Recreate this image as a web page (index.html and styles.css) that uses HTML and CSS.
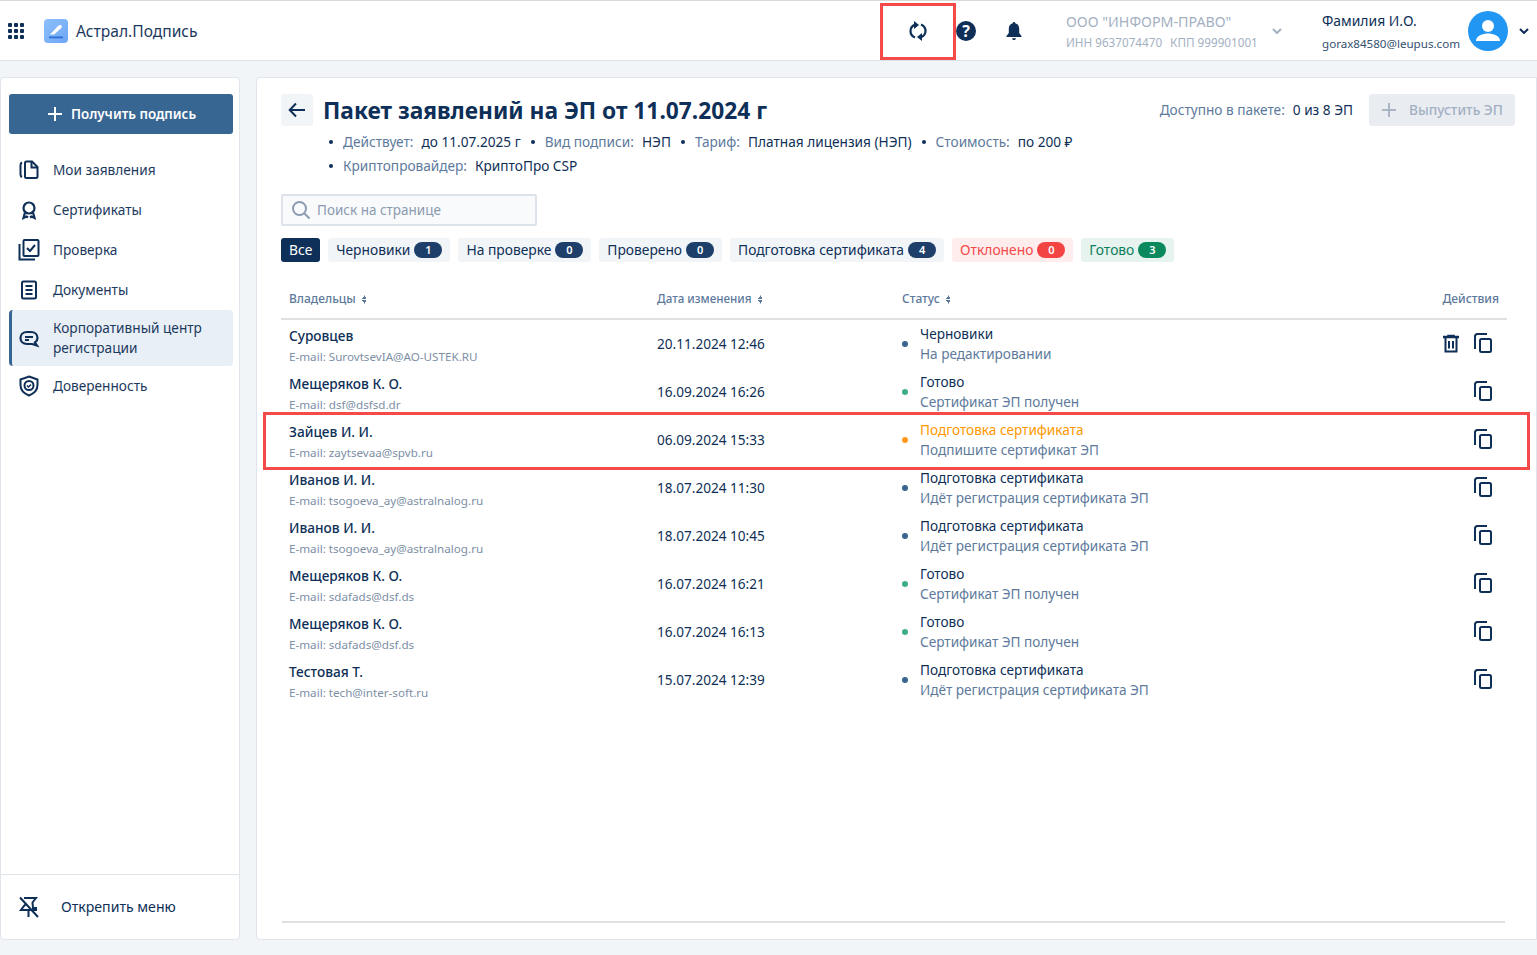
FILE: index.html
```html
<!DOCTYPE html>
<html lang="ru">
<head>
<meta charset="utf-8">
<title>Астрал.Подпись</title>
<link rel="stylesheet" href="styles.css">
</head>
<body>
<svg class="defs" width="0" height="0">
  <defs>
    <symbol id="copy" viewBox="0 0 20 20"><path d="M2 16V3.500C2 2 3 1 4.500 1H14" fill="none" stroke="currentColor" stroke-width="2"/><rect x="7" y="6" width="11" height="13" rx="1.500" fill="none" stroke="currentColor" stroke-width="2"/></symbol>
  </defs>
</svg>
<header class="topbar">
  <div class="brand">
    <svg class="apps" width="18" height="18" viewBox="0 0 18 18"><g fill="#0e2f57"><rect x="1" y="1" width="4" height="4" rx="1"/><rect x="7" y="1" width="4" height="4" rx="1"/><rect x="13" y="1" width="4" height="4" rx="1"/><rect x="1" y="7" width="4" height="4" rx="1"/><rect x="7" y="7" width="4" height="4" rx="1"/><rect x="13" y="7" width="4" height="4" rx="1"/><rect x="1" y="13" width="4" height="4" rx="1"/><rect x="7" y="13" width="4" height="4" rx="1"/><rect x="13" y="13" width="4" height="4" rx="1"/></g></svg>
    <svg class="logo" width="24" height="24" viewBox="0 0 24 24"><defs><linearGradient id="lg" x1="0" y1="0" x2="1" y2="1"><stop offset="0" stop-color="#8cc0fb"/><stop offset="1" stop-color="#6ea6f5"/></linearGradient></defs><rect width="24" height="24" rx="4" fill="url(#lg)"/><path d="M6 15.500 14.500 6.500C15.300 5.700 17 5.800 17.500 6.500 18 7.300 18 8.300 17.300 9L10 15.500Z" fill="#fff"/><rect x="5" y="17.500" width="14" height="1.800" fill="#2f6fd6"/></svg>
    <span class="brand-name">Астрал.Подпись</span>
  </div>
  <div class="top-actions">
    <button class="icon-btn refresh" type="button" aria-label="Обновить">
      <svg width="20" height="20" viewBox="0 0 20 20" fill="none" stroke="#0e2f57" stroke-width="2.200"><path d="M7 16.500C4 15.300 2.500 13 2.500 10 2.500 7 3.800 5 7 3.900"/><path d="M6 0V8L11 4Z" fill="#0e2f57" stroke="none"/><path d="M13 3.500C16 4.700 17.500 7 17.500 10 17.500 13 16.200 15 13 16.100"/><path d="M14 12V20L9 16Z" fill="#0e2f57" stroke="none"/></svg>
    </button>
    <svg class="help" width="20" height="20" viewBox="0 0 20 20"><circle cx="10" cy="10" r="10" fill="#0e2f57"/><text class="help-q" x="10" y="15.500" text-anchor="middle">?</text></svg>
    <svg class="bell" width="16" height="20" viewBox="0 0 16 20"><path d="M8 1C8.800 1 9.300 1.600 9.300 2.300 11.800 2.900 13.200 5 13.200 7.800V12L15.500 15V16H.5V15L2.800 12V7.800C2.800 5 4.200 2.900 6.700 2.300 6.700 1.600 7.200 1 8 1Z" fill="#0e2f57"/><path d="M6 17.200H10C10 18.300 9 19 8 19S6 18.300 6 17.200Z" fill="#0e2f57"/></svg>
    <div class="org">
      <div class="org-name">ООО "ИНФОРМ-ПРАВО"</div>
      <div class="org-meta"><span>ИНН 9637074470</span><span>КПП 999901001</span></div>
    </div>
    <svg class="chev chev-org" width="10" height="6" viewBox="0 0 10 6"><path d="M1 1 5 5 9 1" fill="none" stroke="#a3b0c2" stroke-width="2"/></svg>
    <div class="user">
      <div class="user-name">Фамилия И.О.</div>
      <div class="user-mail">gorax84580@leupus.com</div>
    </div>
    <svg class="avatar" width="40" height="40" viewBox="0 0 40 40"><circle cx="20" cy="20" r="20" fill="#2196f3"/><circle cx="20" cy="15" r="6" fill="#fff"/><path d="M8 30C8 24.500 15 22.500 20 22.500S32 24.500 32 30Z" fill="#fff"/></svg>
    <svg class="chev chev-user" width="10" height="6" viewBox="0 0 10 6"><path d="M1 1 5 5 9 1" fill="none" stroke="#0e2f57" stroke-width="2"/></svg>
  </div>
</header>

<div class="layout">
  <aside class="sidebar">
    <div class="side-top">
      <button class="get-btn" type="button"><span class="plus"></span>Получить подпись</button>
      <nav class="nav">
        <a class="nav-item">
          <svg width="24" height="24" viewBox="0 0 24 24" fill="none" stroke="#0e2f57" stroke-width="2"><path d="M5 4.500C4 5 3.500 6 3.500 7V16.500C3.500 17.500 4 18.500 5 19"/><path d="M8 5C8 4 8.700 3.500 9.500 3.500H15L20.500 9V18.500C20.500 19.500 19.800 20 19 20H9.500C8.700 20 8 19.500 8 18.500Z"/><path d="M14.500 3.500V9.500H20.500"/></svg>
          <span>Мои заявления</span>
        </a>
        <a class="nav-item">
          <svg width="24" height="24" viewBox="0 0 24 24" fill="none" stroke="#0e2f57" stroke-width="2.200"><circle cx="12" cy="10" r="5.500"/><path d="M8 14.500 6.500 20 9.500 18.500 11 19.500M16 14.500 17.500 20 14.500 18.500 13 19.500"/></svg>
          <span>Сертификаты</span>
        </a>
        <a class="nav-item">
          <svg width="24" height="24" viewBox="0 0 24 24" fill="none" stroke="#0e2f57" stroke-width="2"><rect x="6.500" y="2" width="15" height="16" rx="1"/><path d="M2.500 6V21.500H18"/><path d="M10 10 13 13 18 7"/></svg>
          <span>Проверка</span>
        </a>
        <a class="nav-item">
          <svg width="24" height="24" viewBox="0 0 24 24" fill="none" stroke="#0e2f57" stroke-width="2"><rect x="5" y="3.500" width="14" height="17" rx="1.500"/><path d="M8.500 8H15.500M8.500 12H15.500M8.500 16H15.500"/></svg>
          <span>Документы</span>
        </a>
        <a class="nav-item active">
          <svg width="24" height="24" viewBox="0 0 24 24" fill="none" stroke="#0e2f57" stroke-width="2.200"><path d="M10 6H14C18 6 20.500 8.500 20.500 12 20.500 14 19.500 15.500 18 16.500L20 19.500 15 18H10C6 18 3.500 15.500 3.500 12S6 6 10 6Z"/><path d="M8 11H16M8 14H12"/></svg>
          <span>Корпоративный центр регистрации</span>
        </a>
        <a class="nav-item">
          <svg width="24" height="24" viewBox="0 0 24 24" fill="none" stroke="#0e2f57" stroke-width="2"><path d="M12 2.500 20.500 5.500V11C20.500 16 17 19.500 12 21.500 7 19.500 3.500 16 3.500 11V5.500Z"/><circle cx="12" cy="11.500" r="4.500"/><path d="M10 11.500 11.500 13 14 10.500" stroke-width="1.500"/></svg>
          <span>Доверенность</span>
        </a>
      </nav>
    </div>
    <div class="unpin">
      <svg width="24" height="24" viewBox="0 0 24 24" fill="none" stroke="#0e2f57" stroke-width="2"><path d="M3 2.500 21 22"/><path d="M7 3H19L15.500 7.500 16 13H19V15H4L7 11 9 9"/><path d="M11.500 15V22"/></svg>
      <span>Открепить меню</span>
    </div>
  </aside>

  <main class="content">
    <div class="head">
      <div class="title-row">
        <button class="back" type="button" aria-label="Назад">
          <svg width="18" height="16" viewBox="0 0 18 16" fill="none" stroke="#0e2f57" stroke-width="2"><path d="M17 8H2M8 1.500 1.700 8 8 14.500"/></svg>
        </button>
        <h1>Пакет заявлений на ЭП от 11.07.2024 г</h1>
        <div class="avail"><span class="muted">Доступно в пакете:</span><span class="val">0 из 8 ЭП</span></div>
        <button class="issue" type="button"><span class="plus plus-off"></span>Выпустить ЭП</button>
      </div>
      <ul class="meta">
        <li><span class="muted">Действует:</span><span class="val">до 11.07.2025 г</span></li>
        <li><span class="muted">Вид подписи:</span><span class="val">НЭП</span></li>
        <li><span class="muted">Тариф:</span><span class="val">Платная лицензия (НЭП)</span></li>
        <li><span class="muted">Стоимость:</span><span class="val">по 200 ₽</span></li>
        <li class="meta-break"><span class="muted">Криптопровайдер:</span><span class="val">КриптоПро CSP</span></li>
      </ul>
    </div>

    <label class="search">
      <svg width="20" height="20" viewBox="0 0 20 20" fill="none" stroke="#8c9bb0" stroke-width="2"><circle cx="8.500" cy="8.500" r="6.500"/><path d="M13.500 13.500 18.500 18.500"/></svg>
      <span>Поиск на странице</span>
    </label>

    <div class="tabs">
      <span class="tab tab-on">Все</span>
      <span class="tab">Черновики<b>1</b></span>
      <span class="tab">На проверке<b>0</b></span>
      <span class="tab">Проверено<b>0</b></span>
      <span class="tab">Подготовка сертификата<b>4</b></span>
      <span class="tab tab-red">Отклонено<b>0</b></span>
      <span class="tab tab-green">Готово<b>3</b></span>
    </div>

    <div class="table">
      <div class="row row-head">
        <div class="c-owner">Владельцы<i class="sort"></i></div>
        <div class="c-date">Дата изменения<i class="sort"></i></div>
        <div class="c-status">Статус<i class="sort"></i></div>
        <div class="c-act">Действия</div>
      </div>

      <div class="row">
        <div class="c-owner"><div class="name">Суровцев</div><div class="mail">E-mail: SurovtsevIA@AO-USTEK.RU</div></div>
        <div class="c-date">20.11.2024 12:46</div>
        <div class="c-status"><i class="dot blue"></i><div><div class="st">Черновики</div><div class="sub">На редактировании</div></div></div>
        <div class="c-act">
          <svg class="ico" width="20" height="20" viewBox="0 0 20 20" fill="none" stroke="#0e2f57" stroke-width="2"><path d="M2 3H18" stroke-width="2.500"/><path d="M7 2V1.500H13V2" stroke-width="1.500"/><path d="M4.500 4V17.500H15.500V4"/><path d="M8 7V14.500M12 7V14.500"/></svg>
          <svg class="ico"><use href="#copy"/></svg>
        </div>
      </div>

      <div class="row">
        <div class="c-owner"><div class="name">Мещеряков К. О.</div><div class="mail">E-mail: dsf@dsfsd.dr</div></div>
        <div class="c-date">16.09.2024 16:26</div>
        <div class="c-status"><i class="dot green"></i><div><div class="st">Готово</div><div class="sub">Сертификат ЭП получен</div></div></div>
        <div class="c-act"><svg class="ico"><use href="#copy"/></svg></div>
      </div>

      <div class="row">
        <div class="c-owner"><div class="name">Зайцев И. И.</div><div class="mail">E-mail: zaytsevaa@spvb.ru</div></div>
        <div class="c-date">06.09.2024 15:33</div>
        <div class="c-status"><i class="dot orange"></i><div><div class="st st-orange">Подготовка сертификата</div><div class="sub">Подпишите сертификат ЭП</div></div></div>
        <div class="c-act"><svg class="ico"><use href="#copy"/></svg></div>
      </div>

      <div class="row">
        <div class="c-owner"><div class="name">Иванов И. И.</div><div class="mail">E-mail: tsogoeva_ay@astralnalog.ru</div></div>
        <div class="c-date">18.07.2024 11:30</div>
        <div class="c-status"><i class="dot blue"></i><div><div class="st">Подготовка сертификата</div><div class="sub">Идёт регистрация сертификата ЭП</div></div></div>
        <div class="c-act"><svg class="ico"><use href="#copy"/></svg></div>
      </div>

      <div class="row">
        <div class="c-owner"><div class="name">Иванов И. И.</div><div class="mail">E-mail: tsogoeva_ay@astralnalog.ru</div></div>
        <div class="c-date">18.07.2024 10:45</div>
        <div class="c-status"><i class="dot blue"></i><div><div class="st">Подготовка сертификата</div><div class="sub">Идёт регистрация сертификата ЭП</div></div></div>
        <div class="c-act"><svg class="ico"><use href="#copy"/></svg></div>
      </div>

      <div class="row">
        <div class="c-owner"><div class="name">Мещеряков К. О.</div><div class="mail">E-mail: sdafads@dsf.ds</div></div>
        <div class="c-date">16.07.2024 16:21</div>
        <div class="c-status"><i class="dot green"></i><div><div class="st">Готово</div><div class="sub">Сертификат ЭП получен</div></div></div>
        <div class="c-act"><svg class="ico"><use href="#copy"/></svg></div>
      </div>

      <div class="row">
        <div class="c-owner"><div class="name">Мещеряков К. О.</div><div class="mail">E-mail: sdafads@dsf.ds</div></div>
        <div class="c-date">16.07.2024 16:13</div>
        <div class="c-status"><i class="dot green"></i><div><div class="st">Готово</div><div class="sub">Сертификат ЭП получен</div></div></div>
        <div class="c-act"><svg class="ico"><use href="#copy"/></svg></div>
      </div>

      <div class="row">
        <div class="c-owner"><div class="name">Тестовая Т.</div><div class="mail">E-mail: tech@inter-soft.ru</div></div>
        <div class="c-date">15.07.2024 12:39</div>
        <div class="c-status"><i class="dot blue"></i><div><div class="st">Подготовка сертификата</div><div class="sub">Идёт регистрация сертификата ЭП</div></div></div>
        <div class="c-act"><svg class="ico"><use href="#copy"/></svg></div>
      </div>
    </div>
    <div class="foot-line"></div>
  </main>
</div>

<div class="mark mark-refresh"></div>
<div class="mark mark-row"></div>
</body>
</html>
```

FILE: styles.css
```css
* { box-sizing: border-box; }
html, body { height: 100%; }
body {
  margin: 0;
  height: 955px;
  overflow: hidden;
  position: relative;
  background: #f2f5f8;
  color: #0e2f57;
  font-family: "Noto Sans", "Open Sans", sans-serif;
  font-size: 14px;
  line-height: 20px;
}
.defs { position: absolute; }
button { font: inherit; border: 0; cursor: pointer; }

.topbar {
  height: 61px;
  background: #fff;
  border-top: 1px solid #d8d8d8;
  border-bottom: 1px solid #dde3ea;
  display: flex;
  align-items: center;
  justify-content: space-between;
  padding: 0 8px 0 7px;
}
.brand { display: flex; align-items: center; }
.logo { margin-left: 19px; }
.brand-name { margin-left: 8px; font-size: 15.600px; color: #1c3a5e; }
.top-actions { display: flex; align-items: center; }
.icon-btn { background: none; padding: 0; width: 20px; height: 20px; display: flex; }
.help { margin-left: 28px; }
.help-q { font-size: 16px; font-weight: 700; fill: #fff; font-family: "Noto Sans", sans-serif; }
.bell { margin-left: 30px; }
.org { margin-left: 44px; width: 199px; padding-top: 1px; }
.org-name { font-size: 14.250px; line-height: 20px; color: #a3b0c2; }
.org-meta { font-size: 11.700px; line-height: 18px; color: #a3b0c2; display: flex; gap: 8px; margin-top: 1px; }
.chev-org { margin-left: 7px; }
.user { margin-left: 40px; width: 146px; padding-top: 4px; }
.user-name { font-size: 13.900px; line-height: 18px; color: #0e2f57; }
.user-mail { font-size: 11.600px; line-height: 18px; color: #34506f; margin-top: 5px; }
.chev-user { margin-left: 11px; }

.layout {
  display: flex;
  gap: 16px;
  padding-top: 16px;
  height: 879px;
}
.sidebar {
  width: 240px;
  background: #fff;
  border: 1px solid #e0e5ec;
  border-radius: 4px;
  display: flex;
  flex-direction: column;
  justify-content: space-between;
  padding-top: 16px;
}
.side-top { padding: 0 6px 0 8px; }
.get-btn {
  width: 224px;
  height: 40px;
  background: #386693;
  color: #fff;
  border-radius: 3px;
  font-weight: 600;
  font-size: 13.400px;
  display: flex;
  align-items: center;
  justify-content: center;
  padding-left: 8px;
}
.plus {
  width: 14px;
  height: 14px;
  margin-right: 9px;
  background:
    linear-gradient(#fff, #fff) center / 14px 2px no-repeat,
    linear-gradient(#fff, #fff) center / 2px 14px no-repeat;
}
.plus-off {
  background:
    linear-gradient(#a9b5c5, #a9b5c5) center / 14px 2px no-repeat,
    linear-gradient(#a9b5c5, #a9b5c5) center / 2px 14px no-repeat;
  margin-right: 13px;
}
.nav { margin-top: 16px; display: flex; flex-direction: column; }
.nav-item {
  display: flex;
  align-items: center;
  gap: 12px;
  min-height: 40px;
  padding-left: 8px;
  font-size: 13.650px;
  color: #1c3a5e;
}
.nav-item svg { flex: none; }
.nav-item.active {
  min-height: 56px;
  background: #e9eff6;
  border-left: 3px solid #386693;
  border-radius: 4px;
  padding-left: 5px;
  width: 224px;
}
.unpin {
  height: 65px;
  border-top: 1px solid #e0e5ec;
  display: flex;
  align-items: center;
  gap: 20px;
  padding-left: 16px;
  font-size: 14.100px;
}

.content {
  flex: 1;
  background: #fff;
  border: 1px solid #e0e5ec;
  border-radius: 4px 0 0 4px;
  padding: 16px 30px 16px 24px;
  display: flex;
  flex-direction: column;
  min-width: 0;
}
.title-row { display: flex; align-items: center; height: 32px; }
.back {
  width: 32px;
  height: 32px;
  background: #f2f5f8;
  border-radius: 3px;
  display: flex;
  align-items: center;
  justify-content: center;
  padding: 0;
  flex: none;
}
h1 {
  margin: 2px 0 0 10px;
  font-size: 22.750px;
  line-height: 32px;
  font-weight: 700;
  color: #0e2f57;
  flex: 1;
  white-space: nowrap;
}
.avail { display: flex; gap: 8px; font-size: 13.650px; margin-right: 16px; }
.issue {
  width: 146px;
  height: 32px;
  background: #e9edf2;
  color: #a3b0c2;
  border-radius: 3px;
  display: flex;
  align-items: center;
  justify-content: flex-start;
  padding-left: 13px;
  font-size: 13.700px;
  font-weight: 500;
  margin-right: -9px;
}
.muted { color: #5d7a9c; }
.val { color: #0e2f57; margin-left: 8px; }
.avail .val { margin-left: 0; }
.meta {
  list-style: none;
  margin: 4px 0 0;
  padding: 0 0 0 48px;
  display: flex;
  flex-wrap: wrap;
  font-size: 13.650px;
  line-height: 24px;
  width: 900px;
}
.meta li { display: flex; position: relative; padding-left: 14px; margin-right: 10px; }
.meta li::before {
  content: "";
  position: absolute;
  left: 0;
  top: 10px;
  width: 4px;
  height: 4px;
  border-radius: 50%;
  background: #0e2f57;
}
.meta-break { flex-basis: 100%; }

.search {
  margin-top: 16px;
  width: 256px;
  height: 32px;
  background: #f8fafc;
  border: 2px solid #dde3ea;
  border-radius: 2px;
  display: flex;
  align-items: center;
  gap: 6px;
  padding-left: 8px;
  color: #8c9bb0;
  font-size: 13.500px;
}
.tabs { display: flex; gap: 8px; margin-top: 12px; }
.tab {
  height: 24px;
  border-radius: 3px;
  background: #f2f5f8;
  color: #0e2f57;
  padding: 0 8px;
  display: flex;
  align-items: center;
  gap: 4px;
  font-size: 13.800px;
}
.tab b {
  width: 28px;
  height: 16px;
  border-radius: 8px;
  background: #1d3f6a;
  color: #fff;
  font-size: 11px;
  line-height: 16px;
  font-weight: 600;
  text-align: center;
}
.tab-on { background: #0e2f57; color: #fff; }
.tab-red { background: #ffecec; color: #f44a4a; }
.tab-red b { background: #f44343; }
.tab-green { background: #e6f3ee; color: #0d7d5c; }
.tab-green b { background: #0a8a5c; }

.table { flex: 1; margin-top: 18px; width: 1226px; }
.row {
  display: grid;
  grid-template-columns: 368px 245px 1fr 120px;
  height: 48px;
  align-items: center;
  padding-left: 8px;
}
.row-head {
  height: 40px;
  border-bottom: 2px solid #e0e0e0;
  font-size: 12px;
  font-weight: 500;
  color: #5d7a9c;
}
.sort {
  display: inline-block;
  width: 5px;
  height: 9px;
  margin-left: 6px;
  vertical-align: -0.500px;
  background:
    linear-gradient(to bottom right, transparent 50%, #5d7a9c 50%) left top / 50% 4px no-repeat,
    linear-gradient(to bottom left, transparent 50%, #5d7a9c 50%) right top / 50% 4px no-repeat,
    linear-gradient(to top right, transparent 50%, #5d7a9c 50%) left bottom / 50% 4px no-repeat,
    linear-gradient(to top left, transparent 50%, #5d7a9c 50%) right bottom / 50% 4px no-repeat;
}
.row .c-owner { padding-top: 3px; }
.row-head .c-owner { padding-top: 0; }
.name { font-size: 13.650px; font-weight: 500; line-height: 20px; color: #0e2f57; }
.mail { font-size: 11.650px; line-height: 16px; margin-top: 3px; color: #7e8fa6; }
.c-date { font-size: 13.600px; color: #0e2f57; }
.row-head .c-date { font-size: 11.650px; color: #5d7a9c; }
.c-status { display: flex; align-items: center; }
.dot { width: 6px; height: 6px; border-radius: 50%; margin-right: 12px; flex: none; }
.dot.blue { background: #386693; }
.dot.green { background: #3fae85; }
.dot.orange { background: #ff9a1f; }
.st { font-size: 13.600px; line-height: 20px; color: #0e2f57; }
.st-orange { color: #ff9800; }
.sub { font-size: 13.600px; line-height: 20px; color: #5d7a9c; }
.c-act { display: flex; justify-content: flex-end; gap: 12px; padding-right: 14px; align-items: center; }
.row-head .c-act { padding-right: 8px; }
.ico { width: 20px; height: 20px; color: #0e2f57; }
.c-act .ico:last-child { margin-bottom: 2px; }
.foot-line { height: 2px; background: #e0e0e0; margin: 0 0 0 1px; width: 1223px; }

.mark { position: absolute; border: 3px solid #f44a4a; pointer-events: none; }
.mark-refresh { left: 880px; top: 3px; width: 76px; height: 57px; }
.mark-row { left: 263px; top: 412px; width: 1267px; height: 58px; }
```
